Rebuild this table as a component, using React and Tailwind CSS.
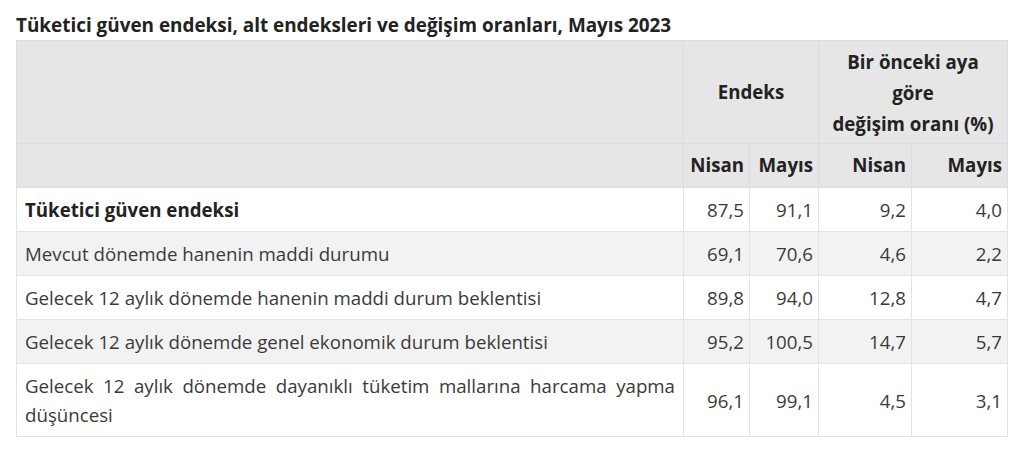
const rows = [
  { label: 'Tüketici güven endeksi', bold: true, v: ['87,5', '91,1', '9,2', '4,0'] },
  { label: 'Mevcut dönemde hanenin maddi durumu', v: ['69,1', '70,6', '4,6', '2,2'] },
  { label: 'Gelecek 12 aylık dönemde hanenin maddi durum beklentisi', v: ['89,8', '94,0', '12,8', '4,7'] },
  { label: 'Gelecek 12 aylık dönemde genel ekonomik durum beklentisi', v: ['95,2', '100,5', '14,7', '5,7'] },
  { label: 'Gelecek 12 aylık dönemde dayanıklı tüketim mallarına harcama yapma düşüncesi', v: ['96,1', '99,1', '4,5', '3,1'] },
];

export default function App() {
  return (
    <div className="bg-white w-[1024px] h-[473px] px-4 pt-[11px] text-[#3a3a3a]" style={{ fontFamily: '"Open Sans", sans-serif' }}>
      <h2 className="text-[18.9px] font-bold leading-[29px] text-[#222]">
        Tüketici güven endeksi, alt endeksleri ve değişim oranları, Mayıs 2023
      </h2>
      <table className="w-[991px] table-fixed border-collapse text-[18.7px] border border-[#e3e3e3]">
        <colgroup>
          <col className="w-[667px]" />
          <col className="w-[66px]" />
          <col className="w-[69px]" />
          <col className="w-[93px]" />
          <col className="w-[96px]" />
        </colgroup>
        <thead className="bg-[#e6e6e6] text-[#222]">
          <tr className="h-[103px]">
            <th className="border border-[#dcdcdc]"></th>
            <th colSpan={2} className="border border-[#dcdcdc] text-center font-bold">Endeks</th>
            <th colSpan={2} className="border border-[#dcdcdc] text-center font-bold leading-[31px] px-1">
              Bir önceki aya<br />göre<br />değişim oranı (%)
            </th>
          </tr>
          <tr className="h-[44px]">
            <th className="border border-[#dcdcdc]"></th>
            <th className="border border-[#dcdcdc] text-right pr-[5px] font-bold">Nisan</th>
            <th className="border border-[#dcdcdc] text-right pr-[5px] font-bold">Mayıs</th>
            <th className="border border-[#dcdcdc] text-right pr-[5px] font-bold">Nisan</th>
            <th className="border border-[#dcdcdc] text-right pr-[5px] font-bold">Mayıs</th>
          </tr>
        </thead>
        <tbody>
          {rows.map((r, i) => (
            <tr key={i} className={i % 2 === 1 ? 'bg-[#f2f2f2]' : 'bg-white'}>
              <td
                className={`border border-[#e3e3e3] pl-2 pr-2 py-[7px] leading-[29px] text-justify ${r.bold ? 'font-bold text-[#222]' : ''}`}
              >
                {r.label}
              </td>
              {r.v.map((n, j) => (
                <td key={j} className="border border-[#e3e3e3] text-right pr-[5px] leading-[29px]">
                  {n}
                </td>
              ))}
            </tr>
          ))}
        </tbody>
      </table>
    </div>
  );
}
